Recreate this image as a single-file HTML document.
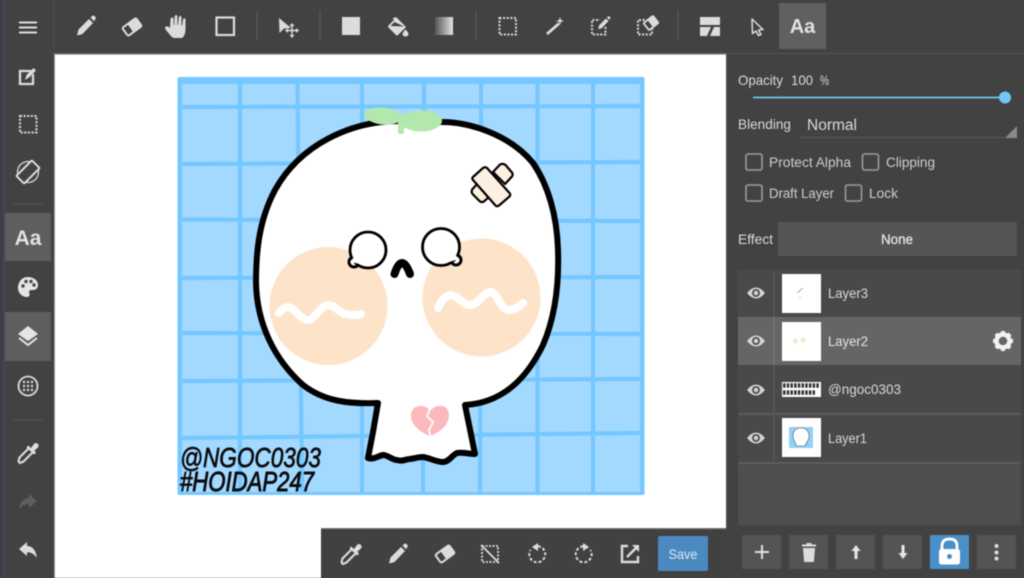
<!DOCTYPE html>
<html><head><meta charset="utf-8">
<style>
html,body{margin:0;padding:0;width:1024px;height:578px;overflow:hidden;background:#424242}
svg{display:block;filter:blur(.45px)}
text{font-family:"Liberation Sans",sans-serif;fill:#d9d9d9}
</style></head><body>
<svg width="1024" height="578" viewBox="0 0 1024 578" xmlns="http://www.w3.org/2000/svg">
<defs>
<linearGradient id="g" x1="0" x2="1" y1="0" y2="0"><stop offset="0" stop-color="#555"/><stop offset="1" stop-color="#e4e4e4"/></linearGradient>
<g id="pencil"><path d="M-9 9.500L-7.500 3.500L3 -7L7 -3L-3.500 8Z M4.500 -8.500L6.500 -10.200Q7.500 -10.800 8.500 -10L9.600 -8.800Q10.200 -8 9.600 -7.200L8 -4.800Z" fill="#dcdcdc"/></g>
<g id="eraser"><g transform="rotate(-36)"><rect x="-8.500" y="-5" width="17" height="10" rx="1.500" fill="none" stroke="#dcdcdc" stroke-width="2"/><rect x="-2" y="-5.500" width="11" height="11" rx="1" fill="#dcdcdc"/></g></g>
<g id="dropper"><path d="M-8 10L-9.500 8.500L-8.500 4.500L1 -5L5 -1L-4.500 8.500Z" fill="none" stroke="#dcdcdc" stroke-width="2.100" stroke-linejoin="round"/><path d="M0 -7.500L3 -5L6 -9Q8 -11 10 -9Q11.500 -7 9.500 -5L6.500 -2.500L8 0L6 1.500L-1.500 -5.500Z" fill="#dcdcdc"/></g>
<g id="eye"><path d="M-9 0Q0 -11 9 0Q0 11 -9 0Z" fill="#d5d5d5"/><circle r="4" fill="#505050"/><circle r="2.200" fill="#d5d5d5"/></g>
</defs>

<rect width="1024" height="578" fill="#424242"/>
<rect x="0" y="0" width="3" height="578" fill="#3e3e47"/>
<rect x="3" y="0" width="2" height="578" fill="#47474c"/>
<rect x="53" y="0" width="1" height="54" fill="#4b4b4b"/>
<rect x="54" y="54" width="672" height="524" fill="#fff"/>
<rect x="54" y="53" width="672" height="1.500" fill="#6a6a6a"/>
<rect x="726" y="53" width="298" height="1" fill="#565656"/>
<rect x="54" y="54" width="1" height="524" fill="#999"/>

<!-- artwork -->
<rect x="177.500" y="77" width="467" height="418" rx="2" fill="#75c7ff"/>
<rect x="182" y="84" width="458" height="408" fill="#a4d9ff"/>
<g stroke="#75c7ff" stroke-width="4.200" fill="none">
<path d="M240 84V492M297.500 84L302 492M362 84V492M424 84L423 492M481 84L480 492M537.500 84V492M593 84V492"/>
<path d="M182 107L640 106M182 164L640 162M182 219.500L640 221M182 278L640 277M182 333L640 334M182 381L640 379M182 438L640 433"/>
</g>

<!-- skull -->
<path d="M400 121C350 121 300 145 275 190C258 222 256 255 256 283C257 325 275 360 303 385C325 402 350 404 378 403L373 432L368 458C373 460 378 456 383 455C388 455 392 460 397 460C402 462 406 459 410 459C416 458 419 457 423 457C430 458 436 462 443 462C449 462 452 455 457 453C463 452 469 454 475 454L465 405C500 403 525 382 543 345C556 315 559 280 558 250C557 215 548 185 533 163C510 135 470 122 442 122Z" fill="#fff" stroke="#000" stroke-width="6" stroke-linejoin="round"/>
<circle cx="328.500" cy="306" r="59" fill="#fde3c8"/>
<circle cx="481.500" cy="297.500" r="59" fill="#fde3c8"/>
<path d="M279 313C283 308 287 306 291 308C297 311 301 320 308 320C315 320 320 306 328 305C335 305 338 312 345 314C351 315 357 316 361 314" fill="none" stroke="#fff" stroke-width="8" stroke-linecap="round"/>
<path d="M438 308C441 301 446 295 451 295C459 296 463 306 471 305C479 304 483 292 491 292C498 293 499 308 508 310C514 310 519 307 523 303" fill="none" stroke="#fff" stroke-width="8" stroke-linecap="round"/>

<!-- eyes -->
<ellipse cx="354" cy="262" rx="5" ry="5" fill="#fff" stroke="#000" stroke-width="3"/>
<circle cx="368" cy="250" r="18" fill="#fff" stroke="#000" stroke-width="2.800"/>
<path d="M355 256L360 264L350 262Z" fill="#fff"/>
<ellipse cx="456" cy="260" rx="5" ry="5" fill="#fff" stroke="#000" stroke-width="3"/>
<circle cx="441" cy="247" r="18.500" fill="#fff" stroke="#000" stroke-width="2.800"/>
<path d="M453 252L449 262L459 259Z" fill="#fff"/>
<!-- nose -->
<path d="M394.500 274Q398 263 402 263Q406 263 410 274" fill="none" stroke="#000" stroke-width="8" stroke-linecap="round"/>

<!-- leaf -->
<ellipse cx="383" cy="116" rx="18.500" ry="8.500" fill="#b3e8ad" transform="rotate(6 383 116)"/>
<ellipse cx="421" cy="121" rx="21" ry="10.500" fill="#b3e8ad"/>
<rect x="398" y="114" width="6" height="20" rx="2" fill="#b3e8ad"/>

<!-- bandage -->
<g stroke="#000" stroke-width="2.200" stroke-linejoin="round" fill="#fdf0e0">
<path d="M493 172L500 164.500Q503 163 505.500 165L512 172.500Q513.500 175 511.500 177L505 184Z"/>
<path d="M479 182L472.500 189Q470.500 192 473 194.500L480 201.500Q482 203 484.500 201L491 195Z"/>
<path d="M487 168L509.500 193Q511 195 509.500 196.500L499 205.500Q497 207 495.500 205.500L473 180Q471.500 178 473 177L483 168Q485 166.500 487 168Z"/>
</g>

<!-- heart -->
<path d="M430 411C425 403 411 404 411 416C411 426 422 433 430 436C438 433 449 426 449 415C449 404 436 403 430 411Z" fill="#fbb9bd"/>
<path d="M431 407L427 416L433 422L429 430L431 438" fill="none" stroke="#fff" stroke-width="1.800"/>

<!-- art text -->
<text x="180" y="467" font-size="28" font-style="italic" textLength="141" lengthAdjust="spacingAndGlyphs" style="fill:#0c0c10;stroke:#0c0c10;stroke-width:.7">@NGOC0303</text>
<text x="180" y="491" font-size="28" font-style="italic" textLength="134" lengthAdjust="spacingAndGlyphs" style="fill:#0c0c10;stroke:#0c0c10;stroke-width:.9">#HOIDAP247</text>

<!-- top toolbar -->
<g fill="#dcdcdc">
<use href="#pencil" x="86" y="26"/>
<use href="#eraser" x="132" y="27"/>
<path d="M170 35C168 32 165 30 165 27.500C166 25.500 168 26 170 28L170.500 19Q171 17.500 172.300 17.500Q173.500 17.500 173.600 19V25H174.300L174.700 16.500Q175 15 176 15Q177.300 15 177.400 16.500V25H178L178.800 17.500Q179 16 180.200 16Q181.500 16 181.500 17.500L181.300 25.500H182L183 19.500Q183.300 18.300 184.400 18.300Q185.600 18.500 185.600 20L185.500 30Q185 36 182 38H174Q172 37.500 170 35Z"/>
<rect x="216.500" y="17.500" width="17.500" height="17.500" fill="none" stroke="#dcdcdc" stroke-width="2.200"/>
<path d="M279 18L291 28L284 28.500L279.500 33Z"/>
<path d="M292 24V37M285.500 30.500H298.500" stroke="#dcdcdc" stroke-width="1.400" fill="none"/>
<path d="M292 23L294.500 26H289.500ZM292 38L294.500 35H289.500ZM285 30.500L288 28V33ZM299 30.500L296 28V33Z"/>
<rect x="342" y="17" width="18" height="18"/>
<path d="M396 17L406 27L398 35Q397 36 396 35L388.500 27.500Q387.500 26.500 388.500 25.500L394 20L392.500 18.500Z M394.500 22L390.500 26L404 26.500Z" fill-rule="evenodd"/>
<path d="M405.500 29.500Q408.500 32.500 408.500 34Q408 36.500 405.500 36.500Q403 36.500 402.500 34Q402.500 32.500 405.500 29.500Z"/>
</g>
<rect x="435" y="17" width="18" height="18" fill="url(#g)"/>
<g stroke="#5a5a5a" stroke-width="1.200"><path d="M257 11V41M320 11V41M476 11V41M678 11V41"/></g>
<g fill="none" stroke="#dcdcdc" stroke-width="2" stroke-dasharray="2 1.600">
<rect x="499.500" y="18" width="16.500" height="16.500"/>
<path d="M605.500 27V34.500H592V20H600"/>
<path d="M652 28V34.500H638V20H645"/>
</g>
<g fill="#dcdcdc">
<path d="M546 33L558 22.500L560 24.500L548 35Z"/>
<path d="M560 17L561 20L564 21L561 22L560 25L559 22L556 21L559 20Z"/>
<g transform="translate(604 23) scale(.65)"><use href="#pencil"/></g>
<g transform="translate(651 23) rotate(-38)"><rect x="-6" y="-4.500" width="12" height="9" rx="1" fill="none" stroke="#dcdcdc" stroke-width="1.800"/><rect x="-1" y="-4.500" width="7" height="9" fill="#dcdcdc"/></g>
<path d="M700 17H720V25H700Z M700 27H711L707 36H700Z M714 27H720V36H710Z"/>
</g>
<path d="M752 19L763 29.500L758.500 30L761 34.500L758.500 35.500L756 31L752.500 33.500Z" fill="none" stroke="#dcdcdc" stroke-width="1.500" stroke-linejoin="round"/>
<rect x="779" y="3" width="47" height="46" fill="#606060"/>
<text x="802.500" y="33" font-size="20" font-weight="bold" text-anchor="middle" style="fill:#e2e2e2">Aa</text>

<!-- left toolbar -->
<g fill="none" stroke="#dcdcdc">
<path d="M19 22.500H37M19 27.500H37M19 32.500H37" stroke-width="2"/>
<path d="M31 71H20V84H33V74" stroke-width="2.300"/>
<rect x="20" y="116" width="16.500" height="16.500" stroke-width="2.100" stroke-dasharray="2 1.600"/>
<g transform="translate(28 172)"><circle r="10.500" stroke-width="1.300"/><rect x="-11" y="-5.500" width="22" height="11" rx="1" transform="rotate(-45)" stroke-width="2" fill="#424242"/></g>
<path d="M13 204H43M13 420H43" stroke="#525252" stroke-width="1.300"/>
</g>
<path d="M25 80L26.500 75L33.500 68L36 70.500L29 77.500Z" fill="#dcdcdc"/>
<rect x="5" y="213" width="46" height="48" fill="#5e5e5e"/>
<text x="28" y="245" font-size="21" font-weight="bold" text-anchor="middle" style="fill:#e2e2e2">Aa</text>
<path d="M28 277C21 277 18 283 18 288C18 293 22 297 27 297C30 297 30 294 29 292.500C29 290 31 290 33 290C37 290 38 287 38 285C38 280 33 277 28 277Z" fill="#e4e4e4"/>
<g fill="#454545"><circle cx="23" cy="286" r="1.700"/><circle cx="26" cy="281.500" r="1.700"/><circle cx="31" cy="281.500" r="1.700"/><circle cx="34" cy="285" r="1.700"/></g>
<rect x="5" y="312" width="46" height="49" fill="#5e5e5e"/>
<path d="M28 326L38 334L28 341L18 334Z" fill="#e6e6e6"/>
<path d="M19 338L28 345L37 338" fill="none" stroke="#e6e6e6" stroke-width="2"/>
<circle cx="28" cy="386" r="9.500" fill="none" stroke="#dcdcdc" stroke-width="1.800"/>
<g fill="#dcdcdc"><circle cx="24" cy="382" r="1.200"/><circle cx="28" cy="382" r="1.200"/><circle cx="32" cy="382" r="1.200"/><circle cx="24" cy="386" r="1.200"/><circle cx="28" cy="386" r="1.200"/><circle cx="32" cy="386" r="1.200"/><circle cx="24" cy="390" r="1.200"/><circle cx="28" cy="390" r="1.200"/><circle cx="32" cy="390" r="1.200"/></g>
<use href="#dropper" x="28" y="453"/>
<path d="M37 501L29 494V498C23 498 20 503 19 509C22 506 25 504 29 504.500V508Z" fill="#5e5e5e"/>
<path d="M19 549L27 542V546C33 546 36 551 37 558C34 554 31 552 27 552.500V556Z" fill="#dcdcdc"/>

<!-- right panel -->
<rect x="726" y="54" width="1.200" height="474" fill="#4d4d4d"/>
<text x="738" y="85" font-size="14" textLength="45" lengthAdjust="spacingAndGlyphs">Opacity</text>
<text x="791" y="85" font-size="14" textLength="22" lengthAdjust="spacingAndGlyphs">100</text>
<text x="820" y="85" font-size="14" textLength="9" lengthAdjust="spacingAndGlyphs">%</text>
<path d="M753 97.500H1005" stroke="#6cc3ec" stroke-width="1.800"/>
<circle cx="1005" cy="97.500" r="6" fill="#70c8f5"/>
<text x="738" y="129" font-size="14" textLength="53" lengthAdjust="spacingAndGlyphs">Blending</text>
<text x="807" y="130" font-size="15.500" textLength="50" lengthAdjust="spacingAndGlyphs">Normal</text>
<path d="M800 137.500H1017" stroke="#565656" stroke-width="1.200"/>
<path d="M1017 126V138H1005Z" fill="#8a8a8a"/>
<g fill="none" stroke="#9c9c9c" stroke-width="1.600">
<rect x="746" y="154" width="16" height="16" rx="2"/>
<rect x="862.500" y="154" width="16" height="16" rx="2"/>
<rect x="746" y="185" width="16" height="16" rx="2"/>
<rect x="845.500" y="185" width="16" height="16" rx="2"/>
</g>
<text x="769" y="167" font-size="14" textLength="82" lengthAdjust="spacingAndGlyphs" style="fill:#cfcfcf">Protect Alpha</text>
<text x="886" y="167" font-size="14" textLength="49" lengthAdjust="spacingAndGlyphs" style="fill:#cfcfcf">Clipping</text>
<text x="769" y="198" font-size="14" textLength="65" lengthAdjust="spacingAndGlyphs" style="fill:#cfcfcf">Draft Layer</text>
<text x="869" y="198" font-size="14" textLength="29" lengthAdjust="spacingAndGlyphs" style="fill:#cfcfcf">Lock</text>
<text x="738" y="244" font-size="14" textLength="35" lengthAdjust="spacingAndGlyphs">Effect</text>
<rect x="778" y="222" width="239" height="34" rx="1" fill="#555"/>
<text x="881" y="244" font-size="14" textLength="32" lengthAdjust="spacingAndGlyphs" style="fill:#e8e8e8;stroke:#e8e8e8;stroke-width:.25">None</text>

<!-- layers -->
<rect x="738" y="270" width="283" height="255" fill="#4e4e4e"/>
<rect x="738" y="270" width="283" height="47" fill="#494949"/>
<rect x="738" y="317" width="283" height="48" fill="#656565"/>
<rect x="738" y="365" width="283" height="48" fill="#494949"/>
<rect x="738" y="415" width="283" height="47" fill="#494949"/>
<path d="M738 414H1021M738 463H1021" stroke="#5c5c5c" stroke-width="2"/>
<path d="M774 270V317M774 365V463" stroke="#585858" stroke-width="1.500"/>
<path d="M774 317V365" stroke="#747474" stroke-width="1.500"/>
<use href="#eye" x="756" y="293"/><use href="#eye" x="756" y="341"/><use href="#eye" x="756" y="390"/><use href="#eye" x="756" y="438"/>
<rect x="782" y="274" width="39" height="39" fill="#fff"/>
<path d="M797 293L803 288" stroke="#aaa" stroke-width="1"/><circle cx="800" cy="297" r=".6" fill="#bbb"/>
<rect x="782" y="322" width="39" height="39" fill="#fff"/>
<circle cx="795.500" cy="341" r="2.500" fill="#f5e5cc"/><circle cx="803" cy="340" r="2.500" fill="#f5e5cc"/>
<rect x="782" y="382" width="39" height="15" fill="#fff"/>
<path d="M783 385.500H820M783 392.500H815" stroke="#333" stroke-width="4.500" stroke-dasharray="2.500 1.200" fill="none"/>
<rect x="782" y="418" width="39" height="39" fill="#fff"/>
<rect x="789" y="427" width="24" height="21" fill="#91d0fb"/>
<path d="M801 428C795 428 792.500 432 793 437C794 441 796 443 796 446L805 446C806 442 809 441 809 436C809 431 806 428 801 428Z" fill="#fff" stroke="#555" stroke-width=".6"/>
<text x="828" y="298" font-size="14" textLength="40" lengthAdjust="spacingAndGlyphs">Layer3</text>
<text x="828" y="346" font-size="14" textLength="40" lengthAdjust="spacingAndGlyphs" style="fill:#e6e6e6">Layer2</text>
<text x="828" y="394" font-size="14" textLength="73" lengthAdjust="spacingAndGlyphs">@ngoc0303</text>
<text x="828" y="443" font-size="14" textLength="39" lengthAdjust="spacingAndGlyphs">Layer1</text>
<g transform="translate(1003 341)"><circle r="6.500" fill="none" stroke="#f2f2f2" stroke-width="4.500"/><path d="M-2 -10H2V-6H-2ZM-2 6H2V10H-2Z M-10 -2H-6V2H-10Z M6 -2H10V2H6Z" fill="#f2f2f2"/><path d="M-2 -10H2V-6H-2ZM-2 6H2V10H-2Z M-10 -2H-6V2H-10Z M6 -2H10V2H6Z" fill="#f2f2f2" transform="rotate(45)"/></g>

<!-- bottom-right buttons -->
<g fill="#545454">
<rect x="742" y="535" width="39" height="34" rx="1"/><rect x="789" y="535" width="39" height="34" rx="1"/>
<rect x="836" y="535" width="39" height="34" rx="1"/><rect x="883" y="535" width="39" height="34" rx="1"/>
<rect x="977" y="535" width="39" height="34" rx="1"/>
</g>
<rect x="930" y="535" width="39" height="34" rx="1" fill="#4a90c8"/>
<path d="M762 545V559M755 552H769" stroke="#e0e0e0" stroke-width="2"/>
<path d="M803 548H815L814 561Q814 562 813 562H805Q804 562 804 561ZM802 544.500H806L807 543H811L812 544.500H816V546.500H802Z" fill="#dcdcdc"/>
<path d="M856 545L860.500 551H857.500V559H854.500V551H851.500Z" fill="#e6e6e6"/>
<path d="M903 559L898.500 553H901.500V545H904.500V553H907.500Z" fill="#e6e6e6"/>
<path d="M942 549V546Q942 539 949.500 539Q957 539 957 546V549" fill="none" stroke="#fff" stroke-width="2.800"/>
<rect x="939" y="549" width="21" height="15.500" rx="2.500" fill="#fff"/>
<circle cx="949.500" cy="556.500" r="2.500" fill="#4a90c8"/>
<g fill="#dcdcdc"><circle cx="996.500" cy="546" r="2"/><circle cx="996.500" cy="552.500" r="2"/><circle cx="996.500" cy="558.500" r="2"/></g>

<!-- bottom toolbar -->
<rect x="321" y="528" width="405" height="50" fill="#414141"/>
<rect x="321" y="528" width="405" height="1.200" fill="#777"/>
<use href="#dropper" x="351" y="554"/>
<use href="#pencil" x="398" y="554"/>
<use href="#eraser" x="445" y="554"/>
<rect x="482" y="546" width="16" height="16" fill="none" stroke="#dcdcdc" stroke-width="1.800" stroke-dasharray="2 1.500"/>
<path d="M481 545L499 563" stroke="#dcdcdc" stroke-width="1.800"/>
<g fill="none" stroke="#dcdcdc" stroke-width="2">
<path d="M533 547.500A8 8 0 1 1 530.500 550" stroke-dasharray="3 2"/>
<path d="M588 547.500A8 8 0 1 0 590.500 550" stroke-dasharray="3 2"/>
<path d="M628 546H622V562H638V556" stroke-width="2.400"/>
<path d="M627 557L637 547" stroke-width="2.400"/>
</g>
<path d="M538 543V551L532 547ZM583 543V551L589 547ZM632 545H639V552Z" fill="#dcdcdc"/>
<rect x="658" y="536" width="50" height="35" rx="2" fill="#4a8ac1"/>
<text x="683" y="559" font-size="14" text-anchor="middle" textLength="29" lengthAdjust="spacingAndGlyphs" style="fill:#dbe9f4">Save</text>
</svg>
</body></html>
